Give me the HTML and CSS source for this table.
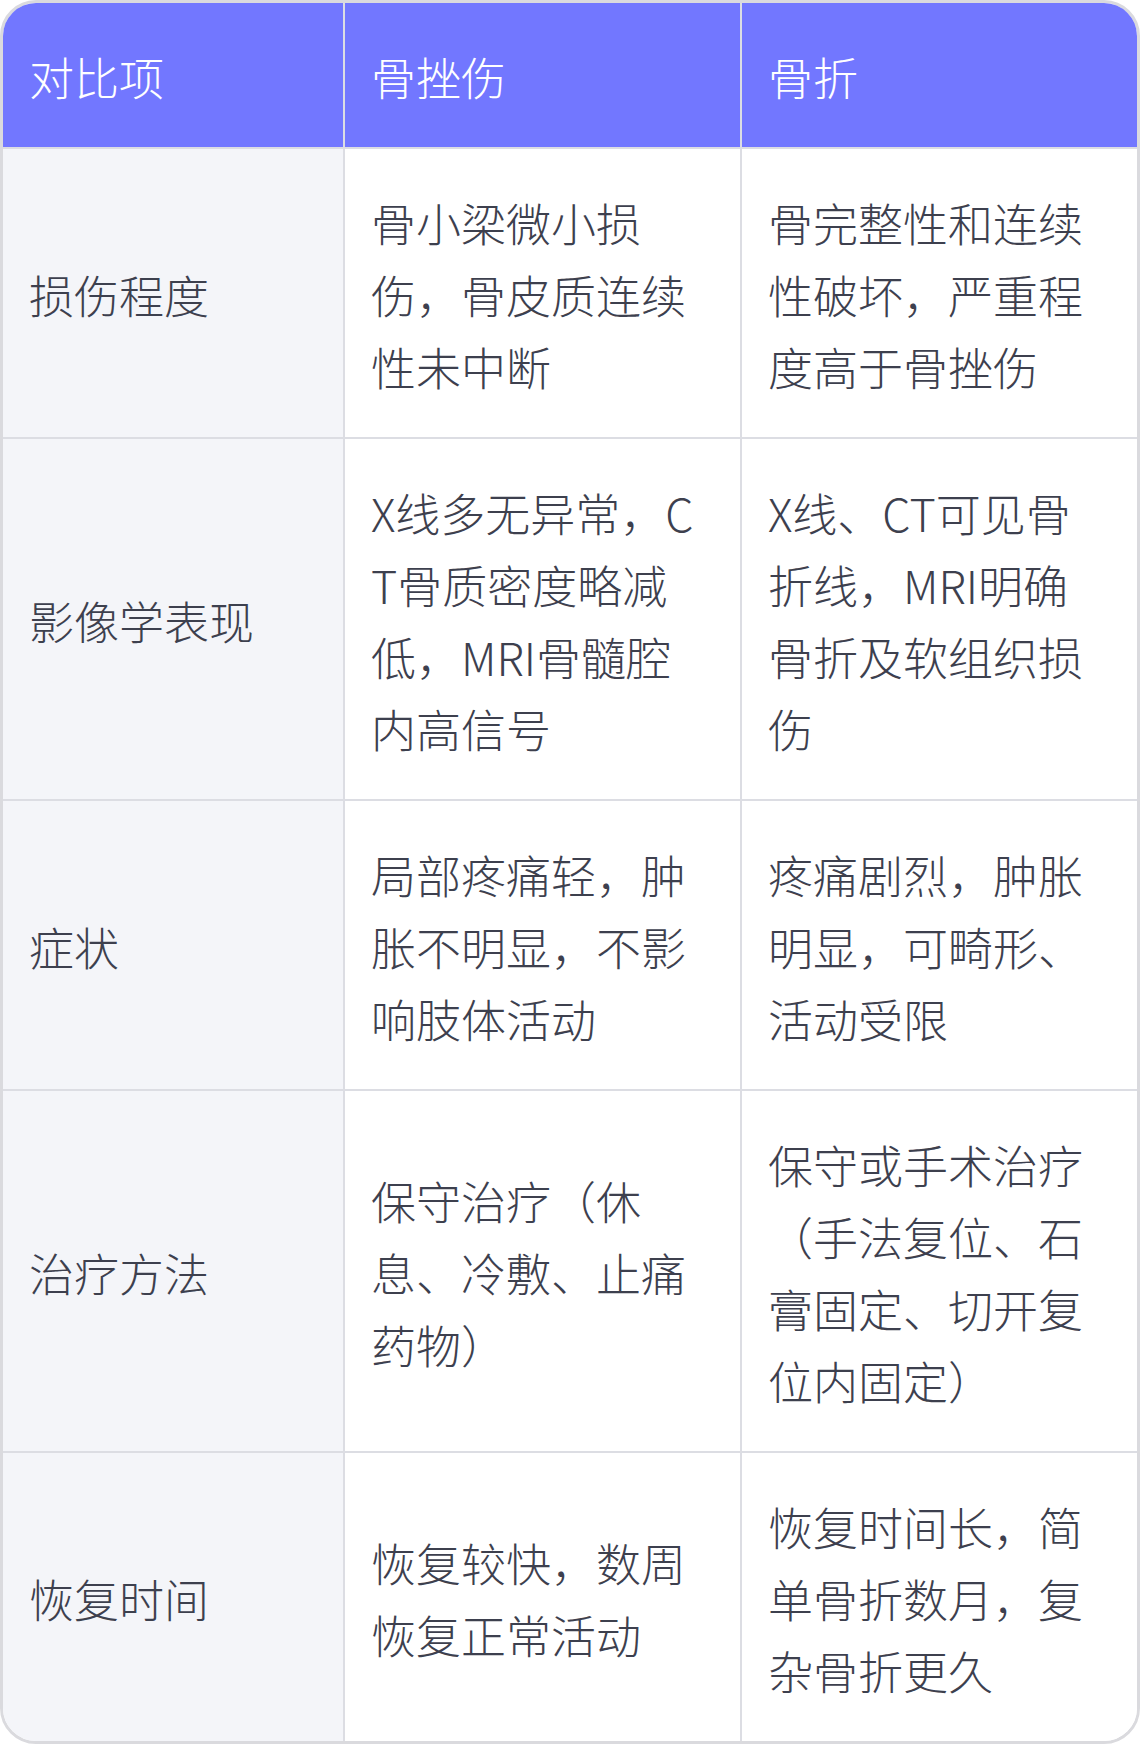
FILE: index.html
```html
<!DOCTYPE html>
<html lang="zh-CN">
<head>
<meta charset="utf-8">
<link rel="stylesheet" href="styles.css">
</head>
<body>
<div class="wrap">
<table class="cmp">
<colgroup><col class="c1"><col class="c2"><col class="c3"></colgroup>
<thead>
<tr><th>对比项</th><th>骨挫伤</th><th>骨折</th></tr>
</thead>
<tbody>
<tr><td class="key">损伤程度</td><td>骨小梁微小损伤，骨皮质连续性未中断</td><td>骨完整性和连续性破坏，严重程度高于骨挫伤</td></tr>
<tr><td class="key">影像学表现</td><td>X线多无异常，CT骨质密度略减低，MRI骨髓腔内高信号</td><td>X线、CT可见骨折线，MRI明确骨折及软组织损伤</td></tr>
<tr><td class="key">症状</td><td>局部疼痛轻，肿胀不明显，不影响肢体活动</td><td>疼痛剧烈，肿胀明显，可畸形、活动受限</td></tr>
<tr><td class="key">治疗方法</td><td>保守治疗（休息、冷敷、止痛药物）</td><td>保守或手术治疗（手法复位、石膏固定、切开复位内固定）</td></tr>
<tr><td class="key">恢复时间</td><td>恢复较快，数周恢复正常活动</td><td>恢复时间长，简单骨折数月，复杂骨折更久</td></tr>
</tbody>
</table>
</div>
</body>
</html>
```
FILE: styles.css
```css
html, body {
  margin: 0;
  padding: 0;
  background: #ffffff;
}
.wrap {
  width: 1140px;
  box-sizing: border-box;
  border: 3px solid #dadade;
  border-radius: 36px;
  overflow: hidden;
}
.cmp {
  width: 100%;
  border-collapse: collapse;
  table-layout: fixed;
  font-family: "Noto Sans CJK SC", "Noto Sans", sans-serif;
  font-weight: 300;
  font-size: 45px;
  line-height: 72px;
  color: #3d404e;
  word-break: break-all;
}
.c1 { width: 341px; }
.c2 { width: 397px; }
.cmp th, .cmp td {
  padding: 38px 30px 34px 26px;
  text-align: left;
  vertical-align: middle;
  border: 2px solid #dcdde3;
}
.cmp tr:first-child th, .cmp tr:first-child td { border-top: 0; }
.cmp tr > :first-child { border-left: 0; }
.cmp tr > :last-child { border-right: 0; }
.cmp tbody tr:last-child td { border-bottom: 0; }
.cmp th {
  background: #7277ff;
  color: #ffffff;
  font-weight: 300;
}
.cmp td { background: #ffffff; }
.cmp td.key { background: #f4f5f9; }
```
